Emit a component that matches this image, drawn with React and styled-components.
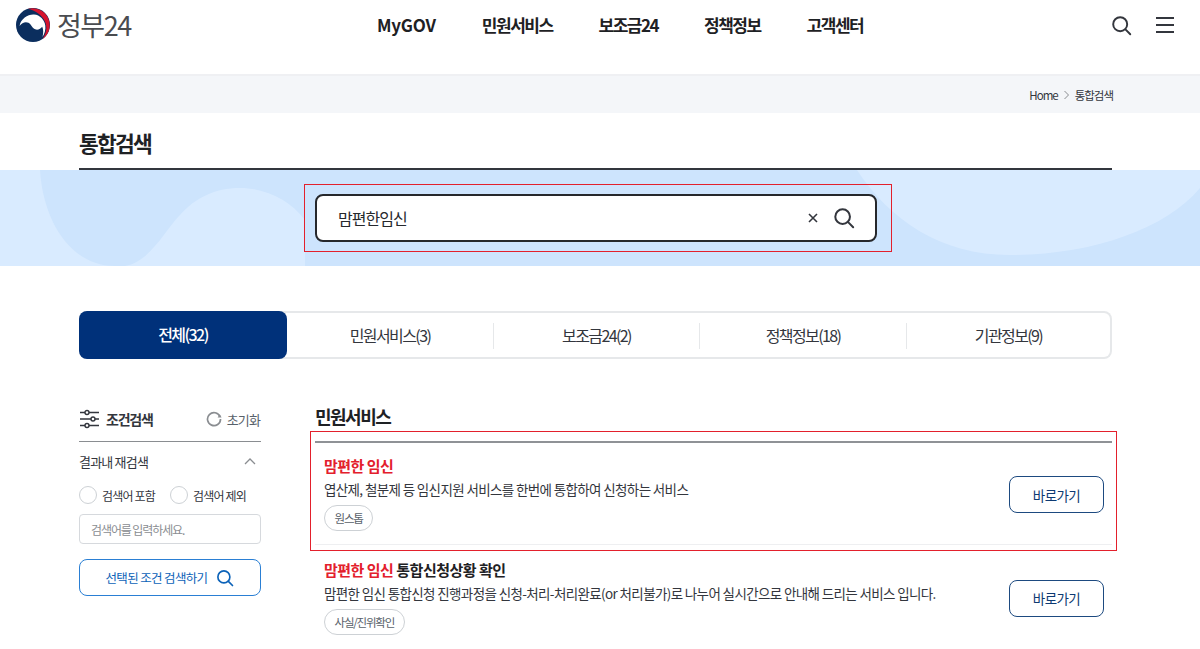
import React from "react"
import styled, { createGlobalStyle } from "styled-components"

const Global = createGlobalStyle`
  html, body { margin: 0; padding: 0; background: #fff; }
  body {
    height: 649px;
    overflow: hidden;
    font-family: "Noto Sans CJK KR", "Noto Sans", sans-serif;
    color: #1e2124;
  }
  * { box-sizing: border-box; }
`

const Header = styled.header`
  height: 76px;
  padding: 0 25px 24px 16px;
  display: flex;
  align-items: center;
  border-bottom: 2px solid #eff0f3;
`
const Logo = styled.div`
  display: flex;
  align-items: center;
  gap: 7px;
  flex: 0 0 361px;
`
const LogoText = styled.span`
  font-size: 27px;
  line-height: 34px;
  color: #4a4c50;
  letter-spacing: -1.5px;
`
const Nav = styled.nav`
  display: flex;
  gap: 46px;
`
const NavItem = styled.a`
  font-size: 17px;
  line-height: 24px;
  font-weight: 700;
  letter-spacing: ${p => (p.$latin ? "-0.2px" : "-1.5px")};
  color: #1e2124;
`
const HeaderIcons = styled.div`
  margin-left: auto;
  display: flex;
  align-items: center;
  gap: 23px;
`
const Crumbs = styled.div`
  height: 37px;
  padding-right: 87px;
  background: #f4f6f9;
  display: flex;
  align-items: center;
  justify-content: flex-end;
  gap: 5px;
  font-size: 11.5px;
  letter-spacing: -1px;
  color: #33363d;
`
const Container = styled.div`
  width: 1033px;
  margin-left: 79px;
`
const PageTitle = styled.h1`
  margin: 0;
  height: 57px;
  padding-top: 13px;
  font-size: 21.5px;
  line-height: 34px;
  font-weight: 700;
  letter-spacing: -1.8px;
  border-bottom: 2px solid #33363d;
`
const Band = styled.section`
  position: relative;
  height: 96px;
  background: #cde4fd;
  display: flex;
  justify-content: center;
  padding-top: 14px;
  overflow: hidden;
`
const BandArt = styled.svg`
  position: absolute;
  inset: 0;
`
const Highlight = styled.div`
  position: relative;
  width: 588px;
  height: 68px;
  padding: 9px 14px 9px 10px;
  margin-left: -4px;
  border: 1px solid #e3202c;
`
const SearchBox = styled.div`
  height: 48px;
  border: 2px solid #26282c;
  border-radius: 8px;
  background: #fff;
  display: flex;
  align-items: center;
  padding: 0 20px 0 21px;
`
const SearchText = styled.span`
  flex: 1;
  font-size: 16px;
  letter-spacing: -1px;
  color: #26282c;
`
const ClearMark = styled.svg`
  margin-right: 15px;
`
const Tabs = styled.div`
  margin-top: 45px;
  height: 48px;
  display: grid;
  grid-template-columns: 208px 206px 206px 207px 1fr;
  align-items: center;
  border: 2px solid #e6e8ea;
  border-left: 0;
  border-radius: 8px;
`
const Tab = styled.div`
  height: ${p => (p.$active ? "48px" : "26px")};
  padding-bottom: ${p => (p.$active ? "3px" : "2px")};
  margin-top: ${p => (p.$active ? "-2px" : "0")};
  display: flex;
  align-items: center;
  justify-content: center;
  font-size: 16px;
  letter-spacing: -1.6px;
  color: ${p => (p.$active ? "#fff" : "#33363d")};
  font-weight: ${p => (p.$active ? 500 : 400)};
  background: ${p => (p.$active ? "#00317a" : "transparent")};
  border-radius: ${p => (p.$active ? "8px" : "0")};
  border-left: ${p => (p.$first || p.$active ? "0" : "1px solid #e6e8ea")};
`
const Columns = styled.div`
  display: flex;
  margin-top: 46px;
  gap: 50px;
`
const Sidebar = styled.aside`
  width: 182px;
  flex: none;
`
const SideHead = styled.div`
  height: 37px;
  display: flex;
  align-items: center;
  justify-content: space-between;
  border-bottom: 1px solid #8a8d91;
  padding-bottom: 8px;
`
const SideTitle = styled.div`
  display: flex;
  align-items: center;
  gap: 6px;
  font-size: 14px;
  font-weight: 700;
  letter-spacing: -1.2px;
  color: #33363d;
`
const Reset = styled.div`
  display: flex;
  align-items: center;
  gap: 5px;
  padding-right: 1px;
  font-size: 13px;
  letter-spacing: -0.9px;
  color: #58616a;
`
const SideRow = styled.div`
  height: 38px;
  padding-right: 4px;
  display: flex;
  align-items: center;
  justify-content: space-between;
  font-size: 13px;
  letter-spacing: -0.8px;
  color: #33363d;
`
const Radios = styled.div`
  display: flex;
  align-items: center;
  margin-top: 1px;
  height: 28px;
`
const Radio = styled.span`
  flex: none;
  width: 18px;
  height: 18px;
  border: 1px solid #cdd1d5;
  border-radius: 50%;
  margin-right: 5px;
`
const RadioLabel = styled.span`
  flex: none;
  width: 68px;
  white-space: nowrap;
  font-size: 12px;
  letter-spacing: -0.8px;
  color: #33363d;
`
const KeywordInput = styled.div`
  height: 30px;
  margin-top: 5px;
  border: 1px solid #d6d9dd;
  border-radius: 4px;
  padding-left: 11px;
  display: flex;
  align-items: center;
  font-size: 12px;
  letter-spacing: -1.1px;
  color: #8a8d91;
`
const FilterButton = styled.div`
  height: 37px;
  margin-top: 15px;
  border: 1px solid #2a7fd4;
  border-radius: 8px;
  display: flex;
  align-items: center;
  justify-content: center;
  gap: 9px;
  font-size: 12.5px;
  letter-spacing: -0.65px;
  color: #0b62b8;
`
const Results = styled.main`
  flex: 1;
  min-width: 0;
  margin-left: 4px;
`
const SectionTitle = styled.h2`
  margin: 0;
  height: 26px;
  font-size: 18px;
  line-height: 22px;
  font-weight: 700;
  letter-spacing: -1.5px;
  color: #1e2124;
`
const ResultFrame = styled.div`
  width: 807px;
  margin-left: -5px;
  height: 120px;
  border: 1px solid #e3202c;
  padding: 9px 4px 5px 4px;
  display: flex;
  flex-direction: column;
`
const GoButton = styled.div`
  width: 95px;
  height: 37px;
  border: 1px solid #1d4a80;
  border-radius: 8px;
  display: flex;
  align-items: center;
  justify-content: center;
  font-size: 13.5px;
  letter-spacing: -0.6px;
  color: #0d3a72;
`
const FrameInner = styled.div`
  flex: 1;
  border-top: 2px solid #8f9296;
  border-bottom: 1px solid #eeeff1;
  display: flex;
  align-items: center;
  justify-content: space-between;
  padding: 0 8px 0 9px;

  ${GoButton} {
    margin-top: 2px;
  }
`
const ResultRow = styled.div`
  display: flex;
  align-items: center;
  justify-content: space-between;
  width: 798px;
  padding: 0 9px;
  margin-top: 8px;
`
const ResultText = styled.div`
  display: flex;
  flex-direction: column;
  align-items: flex-start;
  margin-bottom: 2px;
`
const ResultName = styled.div`
  font-size: 15px;
  line-height: 22px;
  font-weight: 700;
  letter-spacing: -0.5px;
  color: #1e2124;
`
const Mark = styled.span`
  color: #e3202c;
`
const ResultDesc = styled.div`
  margin-top: 2px;
  font-size: 13.5px;
  line-height: 20px;
  letter-spacing: -0.63px;
  color: #33363d;
`
const Tag = styled.span`
  margin-top: 6px;
  height: 26px;
  padding: 0 9.5px;
  border: 1px solid #cdd1d5;
  border-radius: 13px;
  display: inline-flex;
  align-items: center;
  font-size: 11.5px;
  letter-spacing: -1.2px;
  color: #58616a;
`

const SearchIcon = ({ size = 24, color = "#33363d", width = 2.2 }) => (
  <svg width={size} height={size} viewBox="0 0 24 24" fill="none" stroke={color} strokeWidth={width} strokeLinecap="round">
    <circle cx="10.5" cy="10.5" r="8" />
    <path d="M16.5 16.5 22 22" />
  </svg>
)

const Taegeuk = () => (
  <svg width="34" height="34" viewBox="0 0 34 34">
    <circle cx="17" cy="17" r="17" fill="#0b2e5e" />
    <path d="M12 0.8A17 17 0 0 1 26.5 31C30.5 25 31.5 19 29 13.5C26 7 19 2.5 12 0.8Z" fill="#d5132e" />
    <path d="M3.5 18C5 10.5 12 6.2 18 6.6C24 7 28.5 12 29.3 17.5C29.9 21.5 28.5 26 26.5 29C27.5 25 27.5 21.5 26.2 18.8C25 20.5 22.5 22 20 21.6C17 21 16 18.5 14.5 16.5C12 13 6.5 13.5 3.5 18Z" fill="#fff" />
  </svg>
)

const MenuIcon = () => (
  <svg width="20" height="18" viewBox="0 0 20 18" stroke="#33363d" strokeWidth="2">
    <path d="M1 2H19M1 9H19M1 16H19" />
  </svg>
)

const SlidersIcon = () => (
  <svg width="21" height="20" viewBox="0 0 21 20" fill="#fff" stroke="#33363d" strokeWidth="1.4">
    <path d="M1 3.5H20M1 10H20M1 16.5H20" />
    <circle cx="8" cy="3.5" r="2" />
    <circle cx="14" cy="10" r="2" />
    <circle cx="8" cy="16.5" r="2" />
  </svg>
)

const ResetIcon = () => (
  <svg width="16" height="16" viewBox="0 0 16 16" fill="none">
    <path d="M14 5.6A6.5 6.5 0 1 0 14.5 8" stroke="#8a8d91" strokeWidth="1.7" />
    <path d="M11.6 6.4H15.6L13.8 3.2Z" fill="#8a8d91" />
  </svg>
)

const tabs = ["전체(32)", "민원서비스(3)", "보조금24(2)", "정책정보(18)", "기관정보(9)"]
const menu = ["MyGOV", "민원서비스", "보조금24", "정책정보", "고객센터"]

export default function App() {
  return (
    <>
      <Global />
      <Header>
        <Logo>
          <Taegeuk />
          <LogoText>정부24</LogoText>
        </Logo>
        <Nav>
          {menu.map((m, i) => <NavItem key={m} $latin={i === 0}>{m}</NavItem>)}
        </Nav>
        <HeaderIcons>
          <SearchIcon size={21} />
          <MenuIcon />
        </HeaderIcons>
      </Header>
      <Crumbs>
        <span>Home</span>
        <svg width="7" height="10" viewBox="0 0 7 10" fill="none" stroke="#8a8d91" strokeWidth="1"><path d="M1.5 1 5.5 5 1.5 9" /></svg>
        <span>통합검색</span>
      </Crumbs>
      <Container>
        <PageTitle>통합검색</PageTitle>
      </Container>
      <Band>
        <BandArt width="1200" height="96" viewBox="0 0 1200 96">
          <path d="M0 0H40C43 50 70 96 115 96H0Z" fill="#d9ebff" />
          <path d="M125 96C150 92 165 60 180 45C195 28 215 18 240 18C265 18 290 30 305 50V96Z" fill="#d9ebff" />
          <path d="M857 0C890 50 940 85 1010 85C1090 85 1165 60 1200 18V0Z" fill="#d9ebff" />
        </BandArt>
        <Highlight>
          <SearchBox>
            <SearchText>맘편한임신</SearchText>
            <ClearMark width="10" height="10" viewBox="0 0 10 10" stroke="#33363d" strokeWidth="1.6"><path d="M1 1 9 9M9 1 1 9" /></ClearMark>
            <SearchIcon size={22} />
          </SearchBox>
        </Highlight>
      </Band>
      <Container>
        <Tabs>
          {tabs.map((t, i) => (
            <Tab key={t} $active={i === 0} $first={i === 1}>{t}</Tab>
          ))}
        </Tabs>
        <Columns>
          <Sidebar>
            <SideHead>
              <SideTitle><SlidersIcon />조건검색</SideTitle>
              <Reset><ResetIcon />초기화</Reset>
            </SideHead>
            <SideRow>
              결과내 재검색
              <svg width="14" height="8" viewBox="0 0 14 8" fill="none" stroke="#8a8d91" strokeWidth="1.3"><path d="M2 7 7 2 12 7" /></svg>
            </SideRow>
            <Radios>
              <Radio /><RadioLabel>검색어 포함</RadioLabel>
              <Radio /><RadioLabel>검색어 제외</RadioLabel>
            </Radios>
            <KeywordInput>검색어를 입력하세요.</KeywordInput>
            <FilterButton>선택된 조건 검색하기<SearchIcon size={18} color="#0b62b8" /></FilterButton>
          </Sidebar>
          <Results>
            <SectionTitle>민원서비스</SectionTitle>
            <ResultFrame>
              <FrameInner>
                <ResultText>
                  <ResultName><Mark>맘편한 임신</Mark></ResultName>
                  <ResultDesc>엽산제, 철분제 등 임신지원 서비스를 한번에 통합하여 신청하는 서비스</ResultDesc>
                  <Tag>원스톱</Tag>
                </ResultText>
                <GoButton>바로가기</GoButton>
              </FrameInner>
            </ResultFrame>
            <ResultRow>
              <ResultText>
                <ResultName><Mark>맘편한 임신</Mark> 통합신청상황 확인</ResultName>
                <ResultDesc>맘편한 임신 통합신청 진행과정을 신청-처리-처리완료(or 처리불가)로 나누어 실시간으로 안내해 드리는 서비스 입니다.</ResultDesc>
                <Tag>사실/진위확인</Tag>
              </ResultText>
              <GoButton>바로가기</GoButton>
            </ResultRow>
          </Results>
        </Columns>
      </Container>
    </>
  )
}
